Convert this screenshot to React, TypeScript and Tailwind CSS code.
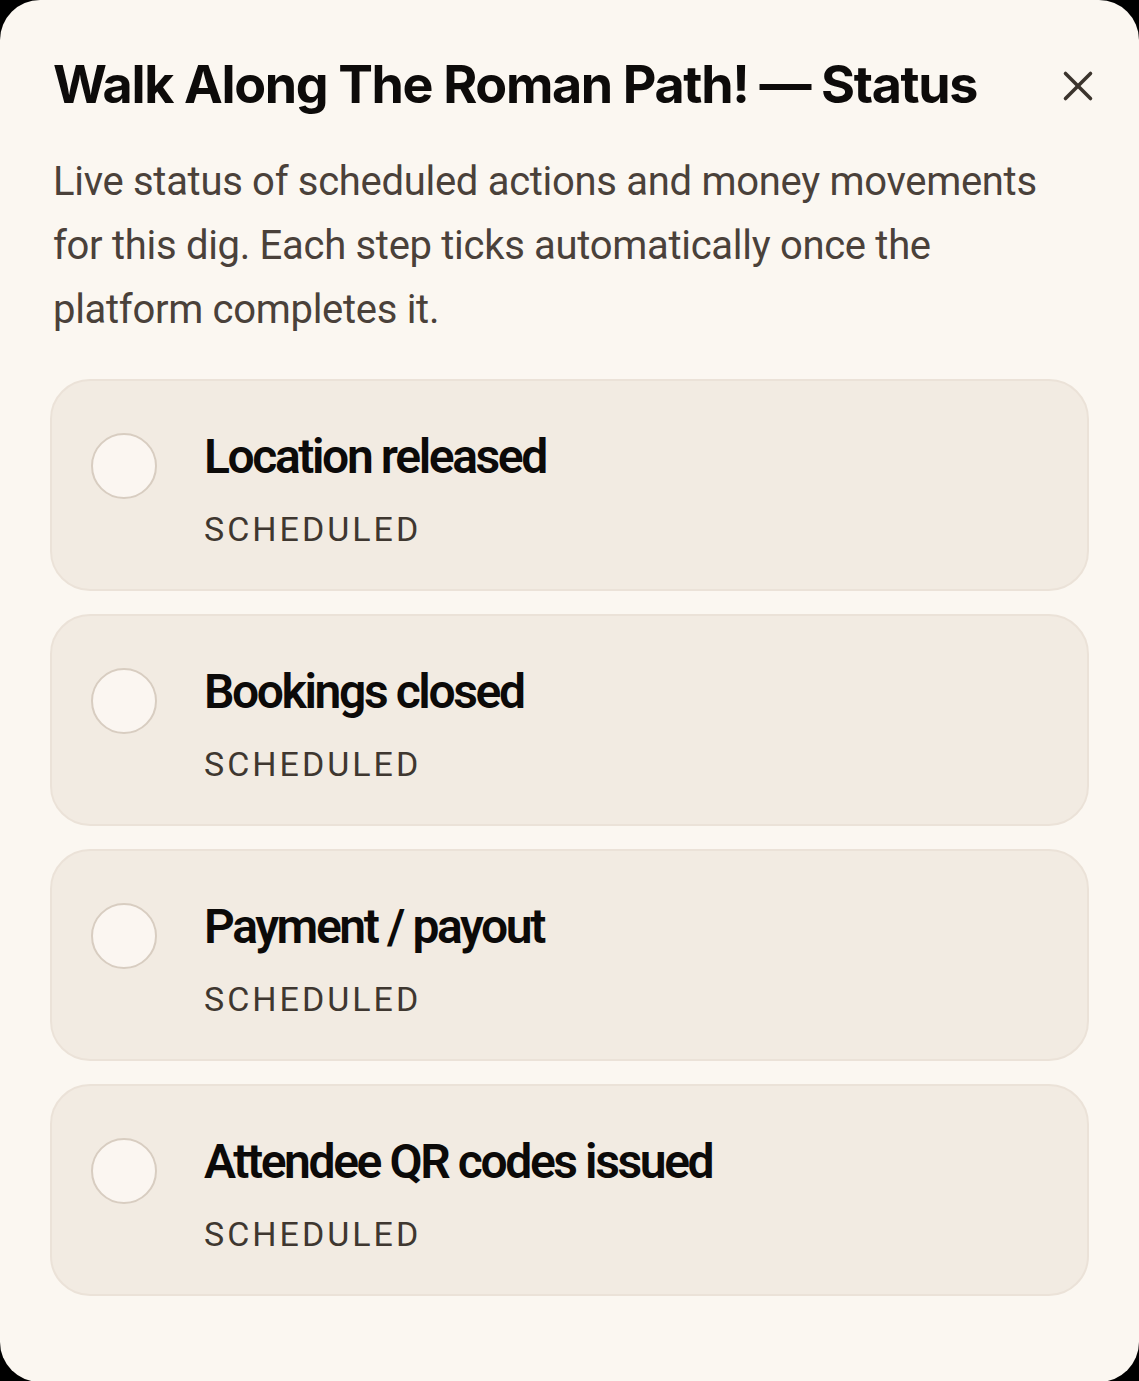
import { X } from 'lucide-react'

const steps = [
  { label: 'Location released', status: 'Scheduled' },
  { label: 'Bookings closed', status: 'Scheduled' },
  { label: 'Payment / payout', status: 'Scheduled' },
  { label: 'Attendee QR codes issued', status: 'Scheduled' },
]

export default function App() {
  return (
    <div className="min-h-screen bg-black">
      <div className="min-h-[1381px] rounded-[40px] bg-[#fbf7f1] px-[50px] pt-[51px] pb-[86px]">
        {/* Header */}
        <div className="flex items-start justify-between">
          <h1 className="pl-[3px] font-['Inter',sans-serif] text-[52px] font-bold leading-[68px] tracking-[-1.35px] text-[#0d0b0a]">
            Walk Along The Roman Path! — Status
          </h1>
          <button className="mt-[10px] -mr-[14px] text-[#3b342d]">
            <X size={50} strokeWidth={1.7} />
          </button>
        </div>

        <p className="mt-[31px] pl-[3px] pr-[40px] font-['Roboto',sans-serif] text-[40px] leading-[64px] tracking-[-0.3px] text-[#4a413a]">
          Live status of scheduled actions and money movements for this dig. Each step ticks automatically once the platform completes it.
        </p>

        {/* Steps */}
        <div className="mt-[37px] flex flex-col gap-[23px]">
          {steps.map((step) => (
            <div
              key={step.label}
              className="flex h-[212px] items-start rounded-[40px] border-2 border-[#ebe2d8] bg-[#f2ebe2] pl-[39px] pt-[52px]"
            >
              <div className="h-[66px] w-[66px] shrink-0 rounded-full border-2 border-[#d8cdc1] bg-[#fbf6f1]" />
              <div className="ml-[47px] -mt-[10px] flex flex-col">
                <div className="font-['Roboto',sans-serif] text-[48px] font-semibold leading-[68px] tracking-[-2.4px] text-[#0c0a09]">
                  {step.label}
                </div>
                <div className="mt-[16px] font-['Roboto',sans-serif] text-[34px] leading-[44px] tracking-[3px] uppercase text-[#3f3730]">
                  {step.status}
                </div>
              </div>
            </div>
          ))}
        </div>
      </div>
    </div>
  )
}
